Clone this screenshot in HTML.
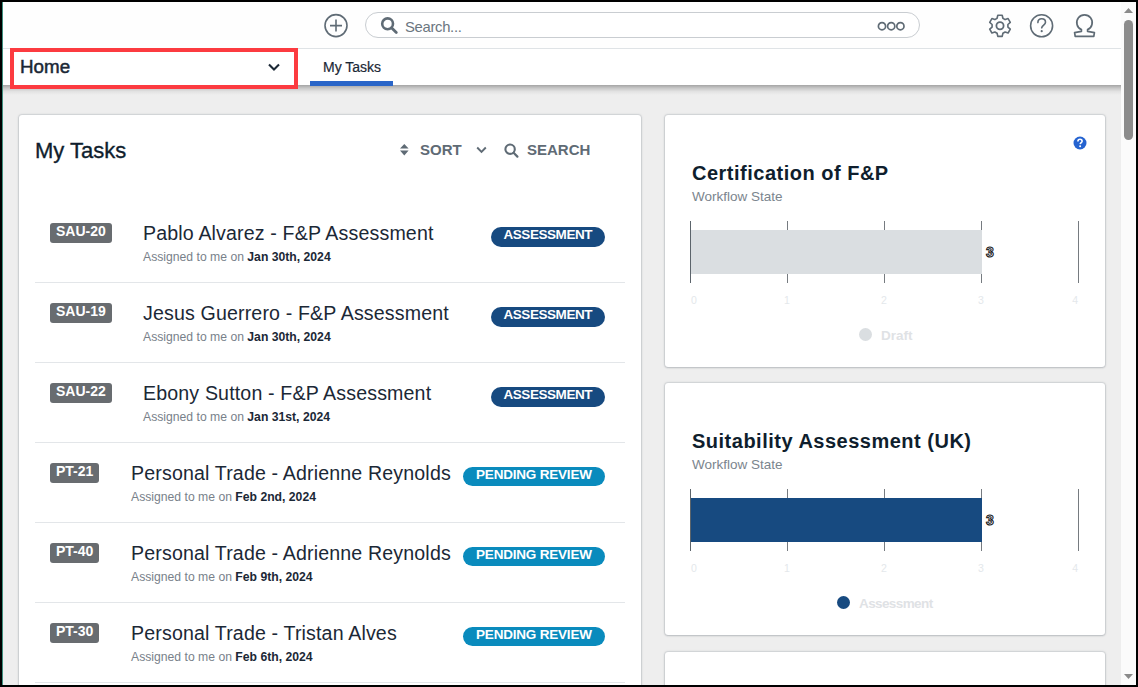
<!DOCTYPE html>
<html><head><meta charset="utf-8">
<style>
*{box-sizing:border-box;margin:0;padding:0}
html,body{width:1138px;height:687px;overflow:hidden;background:#000;font-family:"Liberation Sans",sans-serif}
#root{position:absolute;left:0;top:0;width:1138px;height:687px;background:#eeeeee;clip-path:inset(2px 2px 2px 2px);overflow:hidden}
#teal{position:absolute;left:2px;top:2px;width:1px;height:683px;background:#3d8f7f}
.a{position:absolute}
.t{position:absolute;white-space:nowrap;line-height:1}
#hdr{position:absolute;left:0;top:0;width:1121px;height:49px;background:#fefefe;border-bottom:1px solid #dfe3e6}
#tabs{position:absolute;left:0;top:49px;width:1121px;height:36px;background:#fff;}
#tshadow{position:absolute;left:0;top:85px;width:1121px;height:10px;background:linear-gradient(#a4a4a4,#c6c6c6 30%,#e2e2e2 65%,#eeeeee)}
#search{position:absolute;left:365px;top:12px;width:555px;height:26px;border:1px solid #c9cdd1;border-radius:13px;background:#fff}
#ph{left:405px;top:19.9px;font-size:14.8px;letter-spacing:-.3px;color:#6b7680}
#home{left:20px;top:57.5px;font-size:18.8px;color:#1b2836;-webkit-text-stroke:.5px #1b2836}
#redbox{position:absolute;left:10px;top:48px;width:288px;height:41px;border:4px solid #fc3b40}
#tabmy{left:323px;top:59.5px;font-size:14px;color:#1b2836;-webkit-text-stroke:.2px #1b2836}
#tabline{position:absolute;left:310px;top:81px;width:83px;height:5px;background:#2965c8}
#lc{left:19px;top:115px;width:622px;height:700px}
#mytasks{left:35px;top:140px;font-size:22px;color:#0f1e2d;-webkit-text-stroke:.35px #0f1e2d}
.act{font-size:15px;font-weight:bold;color:#5f6b75}
.sep{position:absolute;left:35px;width:590px;height:1px;background:#e3e6e9}
.badge{position:absolute;left:50px;height:20px;padding:0 6px;border-radius:3px;background:#686c70;color:#fff;font-weight:bold;font-size:14px;line-height:17px;white-space:nowrap}
.title{position:absolute;font-size:19.6px;letter-spacing:.15px;color:#1b2836;white-space:nowrap;line-height:1.2}
.sub{position:absolute;font-size:12.2px;color:#78818a;white-space:nowrap;line-height:1.2}
.sub b{color:#1b2836}
.pill{position:absolute;height:20px;text-align:center;border-radius:10px;color:#fff;font-weight:bold;font-size:13.5px;line-height:16px;white-space:nowrap}
.pa{background:#174a80;left:491px;width:114px;letter-spacing:-.45px;text-indent:-.45px}
.pp{background:#0a8bbd;left:463px;width:142px;letter-spacing:-.2px;text-indent:-.2px}
.card{position:absolute;background:#fff;border-radius:3px;box-shadow:0 0 0 1px rgba(30,50,70,.04),0 0 2.5px rgba(30,45,60,.28),0 1px 2px rgba(30,45,60,.12)}
.ctitle{left:692px;font-size:20px;font-weight:bold;letter-spacing:.5px;color:#0f1e2d}
.csub{left:692px;font-size:13.5px;color:#7b858e}
.vlab{font-size:14px;font-weight:bold;color:#f4f6ff;-webkit-text-stroke:1px #151515}
.alab{font-size:10.5px;color:#e4e8eb}
.leg{font-size:13.5px;font-weight:bold;color:#dfe2e5}
#sb{position:absolute;left:1121px;top:0;width:15px;height:687px;background:#fbfbfb}

</style></head><body>
<div id="root">
<div id="hdr"></div>
<div id="tabs"></div><div id="tshadow"></div>
<svg class="a" style="left:323px;top:13px" width="26" height="26" viewBox="0 0 26 26"><circle cx="13" cy="12.6" r="11" fill="none" stroke="#5f6b75" stroke-width="1.6"/><path d="M13 6.6v12M7 12.6h12" stroke="#5f6b75" stroke-width="1.6" fill="none"/></svg>
<div id="search"></div>
<svg class="a" style="left:380px;top:16px" width="19" height="19" viewBox="0 0 19 19"><circle cx="7.6" cy="7.8" r="5.4" fill="none" stroke="#5f6b75" stroke-width="2.6"/><path d="M11.5 11.8l4.8 4.8" stroke="#5f6b75" stroke-width="2.8" stroke-linecap="round"/></svg>
<div class="t" id="ph">Search...</div>
<svg class="a" style="left:877px;top:21px" width="29" height="11" viewBox="0 0 29 11"><g fill="none" stroke="#5f6b75" stroke-width="1.7"><circle cx="5" cy="5.2" r="3.6"/><circle cx="14.2" cy="5.2" r="3.6"/><circle cx="23.4" cy="5.2" r="3.6"/></g></svg>
<svg class="a" style="left:987px;top:13px" width="26" height="26" viewBox="0 0 26 26"><path fill="none" stroke="#5f6b75" stroke-width="1.6" stroke-linejoin="round" d="M10.8 2.2h4.4l.7 3.1 2.2 1.3 3-1 2.2 3.8-2.4 2.1v2.6l2.4 2.1-2.2 3.8-3-1-2.2 1.3-.7 3.1h-4.4l-.7-3.1-2.2-1.3-3 1-2.2-3.8 2.4-2.1v-2.6L2.7 9.4l2.2-3.8 3 1 2.2-1.3z"/><circle cx="13" cy="12.8" r="3.6" fill="none" stroke="#5f6b75" stroke-width="1.8"/></svg>
<svg class="a" style="left:1029px;top:13px" width="26" height="26" viewBox="0 0 26 26"><circle cx="12.6" cy="12.8" r="11" fill="none" stroke="#5f6b75" stroke-width="1.6"/><path d="M8.9 9.6c0-2.3 1.7-3.8 3.8-3.8s3.8 1.4 3.8 3.4c0 2.6-3.3 3-3.8 5.6" fill="none" stroke="#5f6b75" stroke-width="1.6" stroke-linecap="round"/><circle cx="12.7" cy="18.2" r="1.1" fill="#5f6b75"/></svg>
<svg class="a" style="left:1071px;top:13px" width="26" height="26" viewBox="0 0 26 26"><path fill="none" stroke="#5f6b75" stroke-width="1.7" stroke-linejoin="round" d="M10.4 16.6A7.7 7.7 0 1 1 16.6 16.6V18.4L23.4 19.6 22.8 23.4H4.2L3.6 19.6 10.4 18.4Z"/></svg>
<div class="t" id="home">Home</div>
<svg class="a" style="left:267px;top:62px" width="14" height="10" viewBox="0 0 14 10"><path d="M2 2.4l5 5 5-5" fill="none" stroke="#1b2836" stroke-width="2.1"/></svg>
<div id="redbox"></div>
<div class="t" id="tabmy">My Tasks</div>
<div id="tabline"></div>
<div class="card" id="lc"></div>
<div class="t" id="mytasks">My Tasks</div>
<svg class="a" style="left:399px;top:143px" width="11" height="14" viewBox="0 0 11 14"><path d="M1 5.6L5.3 1l4.3 4.6zM1 7.6h8.6L5.3 12.4z" fill="#5f6b75"/></svg>
<div class="t act" style="left:420px;top:141.5px">SORT</div>
<svg class="a" style="left:476px;top:146px" width="11" height="8" viewBox="0 0 11 8"><path d="M1.2 1.5l4.3 4.3 4.3-4.3" fill="none" stroke="#5f6b75" stroke-width="1.9"/></svg>
<svg class="a" style="left:503px;top:142px" width="17" height="16" viewBox="0 0 17 16"><circle cx="7.1" cy="7.2" r="4.7" fill="none" stroke="#5f6b75" stroke-width="2.1"/><path d="M10.6 10.8l3.8 3.8" stroke="#5f6b75" stroke-width="2.2" stroke-linecap="round"/></svg>
<div class="t act" style="left:527px;top:141.5px">SEARCH</div>
<div class="badge" style="top:223px">SAU-20</div>
<div class="title" style="left:143px;top:221.6px">Pablo Alvarez - F&P Assessment</div>
<div class="sub" style="left:143px;top:249.8px">Assigned to me on <b>Jan 30th, 2024</b></div>
<div class="pill pa" style="top:227px">ASSESSMENT</div>
<div class="sep" style="top:282px"></div>
<div class="badge" style="top:303px">SAU-19</div>
<div class="title" style="left:143px;top:301.6px">Jesus Guerrero - F&P Assessment</div>
<div class="sub" style="left:143px;top:329.8px">Assigned to me on <b>Jan 30th, 2024</b></div>
<div class="pill pa" style="top:307px">ASSESSMENT</div>
<div class="sep" style="top:362px"></div>
<div class="badge" style="top:383px">SAU-22</div>
<div class="title" style="left:143px;top:381.6px">Ebony Sutton - F&P Assessment</div>
<div class="sub" style="left:143px;top:409.8px">Assigned to me on <b>Jan 31st, 2024</b></div>
<div class="pill pa" style="top:387px">ASSESSMENT</div>
<div class="sep" style="top:442px"></div>
<div class="badge" style="top:463px">PT-21</div>
<div class="title" style="left:131px;top:461.6px">Personal Trade - Adrienne Reynolds</div>
<div class="sub" style="left:131px;top:489.8px">Assigned to me on <b>Feb 2nd, 2024</b></div>
<div class="pill pp" style="top:467px;height:19px;line-height:15px">PENDING REVIEW</div>
<div class="sep" style="top:522px"></div>
<div class="badge" style="top:543px">PT-40</div>
<div class="title" style="left:131px;top:541.6px">Personal Trade - Adrienne Reynolds</div>
<div class="sub" style="left:131px;top:569.8px">Assigned to me on <b>Feb 9th, 2024</b></div>
<div class="pill pp" style="top:547px;height:19px;line-height:15px">PENDING REVIEW</div>
<div class="sep" style="top:602px"></div>
<div class="badge" style="top:623px">PT-30</div>
<div class="title" style="left:131px;top:621.6px">Personal Trade - Tristan Alves</div>
<div class="sub" style="left:131px;top:649.8px">Assigned to me on <b>Feb 6th, 2024</b></div>
<div class="pill pp" style="top:627px;height:19px;line-height:15px">PENDING REVIEW</div>
<div class="sep" style="top:682px"></div>
<div class="card" style="left:665px;top:115px;width:440px;height:252px"></div>
<svg class="a" style="left:1073px;top:136px" width="14" height="14" viewBox="0 0 14 14"><circle cx="7" cy="7" r="6.5" fill="#2563d0"/><path d="M4.9 5.4c0-1.3.9-2.1 2.1-2.1s2.1.8 2.1 1.9c0 1.4-1.6 1.5-1.9 2.9" fill="none" stroke="#fff" stroke-width="1.6"/><circle cx="7.1" cy="10.3" r="1" fill="#fff"/></svg>
<div class="card" style="left:665px;top:383px;width:440px;height:252px"></div>
<div class="card" style="left:665px;top:652px;width:440px;height:200px"></div>
<div class="t ctitle" style="top:163px">Certification of F&amp;P</div>
<div class="t csub" style="top:190px">Workflow State</div>
<div class="a" style="z-index:2;left:690px;top:220.6px;width:1px;height:62px;background:#5c646b"></div>
<div class="a" style="left:787px;top:220.6px;width:1px;height:62px;background:#767b80"></div>
<div class="a" style="left:884px;top:220.6px;width:1px;height:62px;background:#767b80"></div>
<div class="a" style="left:981px;top:220.6px;width:1px;height:62px;background:#767b80"></div>
<div class="a" style="left:1078px;top:220.6px;width:1px;height:62px;background:#767b80"></div>
<div class="a" style="z-index:1;left:691px;top:230px;width:291px;height:44px;background:#dadee1"></div>
<div class="t vlab" style="left:986px;top:245px">3</div>
<div class="t alab" style="left:691px;top:295px">0</div>
<div class="t alab" style="left:767px;width:40px;text-align:center;top:295px">1</div>
<div class="t alab" style="left:864px;width:40px;text-align:center;top:295px">2</div>
<div class="t alab" style="left:961px;width:40px;text-align:center;top:295px">3</div>
<div class="t alab" style="left:1038px;width:40px;text-align:right;top:295px">4</div>
<div class="a" style="left:859px;top:328px;width:13px;height:13px;border-radius:50%;background:#dadee1"></div>
<div class="t leg" style="left:881px;top:329px;letter-spacing:0px">Draft</div>
<div class="t ctitle" style="top:431px">Suitability Assessment (UK)</div>
<div class="t csub" style="top:458px">Workflow State</div>
<div class="a" style="z-index:2;left:690px;top:488.6px;width:1px;height:62px;background:#5c646b"></div>
<div class="a" style="left:787px;top:488.6px;width:1px;height:62px;background:#767b80"></div>
<div class="a" style="left:884px;top:488.6px;width:1px;height:62px;background:#767b80"></div>
<div class="a" style="left:981px;top:488.6px;width:1px;height:62px;background:#767b80"></div>
<div class="a" style="left:1078px;top:488.6px;width:1px;height:62px;background:#767b80"></div>
<div class="a" style="z-index:1;left:691px;top:498px;width:291px;height:44px;background:#174a80"></div>
<div class="t vlab" style="left:986px;top:513px">3</div>
<div class="t alab" style="left:691px;top:563px">0</div>
<div class="t alab" style="left:767px;width:40px;text-align:center;top:563px">1</div>
<div class="t alab" style="left:864px;width:40px;text-align:center;top:563px">2</div>
<div class="t alab" style="left:961px;width:40px;text-align:center;top:563px">3</div>
<div class="t alab" style="left:1038px;width:40px;text-align:right;top:563px">4</div>
<div class="a" style="left:837px;top:596px;width:13px;height:13px;border-radius:50%;background:#174a80"></div>
<div class="t leg" style="left:859px;top:597px;letter-spacing:-0.6px">Assessment</div>
<div id="sb"></div>
<svg class="a" style="left:1123px;top:7px" width="11" height="7" viewBox="0 0 11 7"><path d="M1 6L5.5 1 10 6z" fill="#8a8a8a"/></svg>
<div class="a" style="left:1124px;top:19.5px;width:9px;height:120.5px;border-radius:4.5px;background:#8c8c8c"></div>
<svg class="a" style="left:1123px;top:673px" width="11" height="7" viewBox="0 0 11 7"><path d="M1 1h9L5.5 6z" fill="#8a8a8a"/></svg>
</div>
<div id="teal"></div>
</body></html>
